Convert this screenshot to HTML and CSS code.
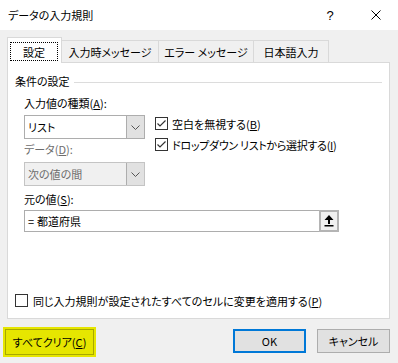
FILE: index.html
```html
<!DOCTYPE html>
<html lang="ja">
<head>
<meta charset="utf-8">
<title>データの入力規則</title>
<link rel="stylesheet" href="styles.css">
</head>
<body>
<div class="win">
  <div class="titlebar">
    <span class="title">データの入力規則</span>
    <span class="help">?</span>
    <span class="close"><svg width="10" height="10" viewBox="0 0 10 10"><path d="M0.5 0.5 L9.5 9.5 M9.5 0.5 L0.5 9.5" stroke="#000" stroke-width="1" fill="none"/></svg></span>
  </div>
  <div class="client">
    <div class="tabs">
      <div class="tab active"><span class="focus">設定</span></div>
      <div class="tab t2">入力時メッセージ</div>
      <div class="tab t3">エラー メッセージ</div>
      <div class="tab t4">日本語入力</div>
    </div>
    <div class="panel">
      <div class="legend"><span>条件の設定</span><span class="rule"></span></div>
      <div class="content">
        <div class="lbl l-a">入力値の種類(<u>A</u>):</div>
        <div class="row">
          <div class="left">
            <div class="combo">
              <span class="val">リスト</span>
              <span class="arrow"><svg width="9" height="5" viewBox="0 0 9 5"><path d="M0.5 0.5 L4.5 4.5 L8.5 0.5" stroke="#555" stroke-width="1" fill="none"/></svg></span>
            </div>
            <div class="lbl dis l-d">データ(<u>D</u>):</div>
            <div class="combo disabled">
              <span class="val">次の値の間</span>
              <span class="arrow"><svg width="9" height="5" viewBox="0 0 9 5"><path d="M0.5 0.5 L4.5 4.5 L8.5 0.5" stroke="#555" stroke-width="1" fill="none"/></svg></span>
            </div>
          </div>
          <div class="right">
            <div class="chk">
              <span class="box"><svg width="13" height="13" viewBox="0 0 13 13"><path d="M2.5 6.5 L5 9 L10.5 3.5" stroke="#333" stroke-width="1.2" fill="none"/></svg></span>
              <span>空白を無視する(<u>B</u>)</span>
            </div>
            <div class="chk">
              <span class="box"><svg width="13" height="13" viewBox="0 0 13 13"><path d="M2.5 6.5 L5 9 L10.5 3.5" stroke="#333" stroke-width="1.2" fill="none"/></svg></span>
              <span class="tight">ドロップダウン リストから選択する(<u>I</u>)</span>
            </div>
          </div>
        </div>
        <div class="lbl l-s">元の値(<u>S</u>):</div>
        <div class="src">
          <div class="input"><span class="eq">=</span>都道府県</div>
          <div class="ref"><svg width="10" height="12" viewBox="0 0 10 12"><path d="M5 0 L9.5 5 L6 5 L6 9 L4 9 L4 5 L0.5 5 Z" fill="#000"/><rect x="0.5" y="10" width="9" height="1.5" fill="#000"/></svg></div>
        </div>
      </div>
      <div class="chk apply">
        <span class="box"></span>
        <span>同じ入力規則が設定されたすべてのセルに変更を適用する(<u>P</u>)</span>
      </div>
    </div>
    <div class="footer">
      <button class="btn clear">すべてクリア(<u>C</u>)</button>
      <button class="btn ok">OK</button>
      <button class="btn cancel">キャンセル</button>
    </div>
  </div>
</div>
</body>
</html>
```

FILE: styles.css
```css
* { box-sizing: border-box; }
html, body { margin: 0; padding: 0; }
body {
  font-family: "Noto Sans CJK JP", "Noto Sans", sans-serif;
  font-size: 11px;
  font-feature-settings: "palt";
  color: #000;
  background: #f0f0f0;
}
u { text-decoration: underline; text-underline-offset: 1px; }
.win { width: 398px; height: 363px; background: #f0f0f0; overflow: hidden; }

.titlebar {
  height: 30px;
  background: #fff;
  display: flex;
  align-items: center;
}
.title { flex: 1; padding-left: 8px; line-height: 16px; }
.help { width: 46px; text-align: center; font-size: 13px; font-family: "Liberation Sans", sans-serif; }
.close { width: 45px; display: flex; justify-content: center; align-items: center; }
.close svg { display: block; }

.client { display: flex; flex-direction: column; }

.tabs {
  display: flex;
  align-items: flex-end;
  margin-top: 7px;
  margin-left: 7px;
  height: 25px;
  position: relative;
  z-index: 1;
}
.tab {
  height: 22px;
  border-top: 1px solid #d9d9d9;
  border-right: 1px solid #d9d9d9;
  background: #f0f0f0;
  display: flex;
  align-items: center;
  justify-content: center;
  line-height: 16px;
  padding-top: 1px;
}
.tab.active {
  width: 55px;
  height: 26px;
  margin-bottom: -1px;
  background: #fff;
  border-left: 1px solid #d9d9d9;
  align-items: flex-start;
  justify-content: flex-start;
  padding: 4px 0 0 2px;
}
.focus {
  width: 48px;
  height: 19px;
  border: 1px dotted #000;
  display: flex;
  align-items: center;
  justify-content: center;
}
.t2 { width: 97px; }
.t3 { width: 95px; }
.t4 { width: 75px; }

.panel {
  margin-left: 7px;
  width: 383px;
  height: 257px;
  background: #fff;
  border: 1px solid #d9d9d9;
  display: flex;
  flex-direction: column;
}
.legend {
  display: flex;
  align-items: center;
  margin-top: 10px;
  padding-left: 7px;
  padding-right: 7px;
  line-height: 16px;
}
.rule { flex: 1; border-top: 1px solid #dcdcdc; margin-left: 4px; margin-top: 2px; }

.content { padding-left: 16px; }
.lbl { line-height: 16px; }
.l-a { margin-top: 6px; }
.l-d { margin-top: 2px; }
.l-s { margin-top: 5px; }
.dis { color: #6d6d6d; }

.row { display: flex; margin-top: 4px; }
.left { width: 121px; }
.right {
  margin-left: 10px;
  padding-top: 2px;
  display: flex;
  flex-direction: column;
  gap: 8px;
}

.combo {
  height: 24px;
  border: 1px solid #adadad;
  display: flex;
  background: #fff;
}
.combo.disabled { background: #f0f0f0; color: #6d6d6d; margin-top: 5px; border-color: #c4c4c4; }
.combo .val { flex: 1; padding-left: 3px; display: flex; align-items: center; }
.combo .arrow {
  width: 18px;
  background: #e1e1e1;
  border-left: 1px solid #adadad;
  display: flex;
  align-items: center;
  justify-content: center;
}
.combo .arrow svg { display: block; }

.chk { display: flex; align-items: center; height: 13px; line-height: 16px; }
.tight { letter-spacing: -0.3px; }
.box {
  width: 13px;
  height: 13px;
  border: 1px solid #333;
  background: #fff;
  margin-right: 4px;
  flex: none;
  position: relative;
}
.box svg { display: block; position: absolute; left: -1px; top: -1px; }

.src { display: flex; margin-top: 3px; height: 22px; }
.input {
  width: 295px;
  border: 1px solid #adadad;
  border-right: none;
  padding-left: 3px;
  display: flex;
  align-items: center;
}
.eq { margin-right: 3px; }
.ref {
  width: 20px;
  border: 2px solid #b4b4b4;
  background: #f0f0f0;
  display: flex;
  align-items: center;
  justify-content: center;
}
.ref svg { display: block; }

.apply { margin-top: auto; margin-bottom: 11px; margin-left: 7px; }
.apply .box { margin-right: 5px; }

.footer {
  display: flex;
  margin-top: 10px;
  padding-right: 8px;
  padding-left: 5px;
  align-items: flex-start;
}
.btn {
  font-family: inherit;
  font-size: 11px;
  font-feature-settings: "palt";
  color: #000;
  height: 24px;
  padding: 0;
  background: #e1e1e1;
  border: 1px solid #adadad;
  line-height: 16px;
}
.clear {
  width: 89px;
  height: 26px;
  background: #e6e600;
  border-color: #a8a800;
  box-shadow: 0 0 0 2px #e6e600;
}
.ok { margin-left: auto; width: 73px; border: 2px solid #0078d7; }
.cancel { margin-left: 11px; width: 73px; }
```
